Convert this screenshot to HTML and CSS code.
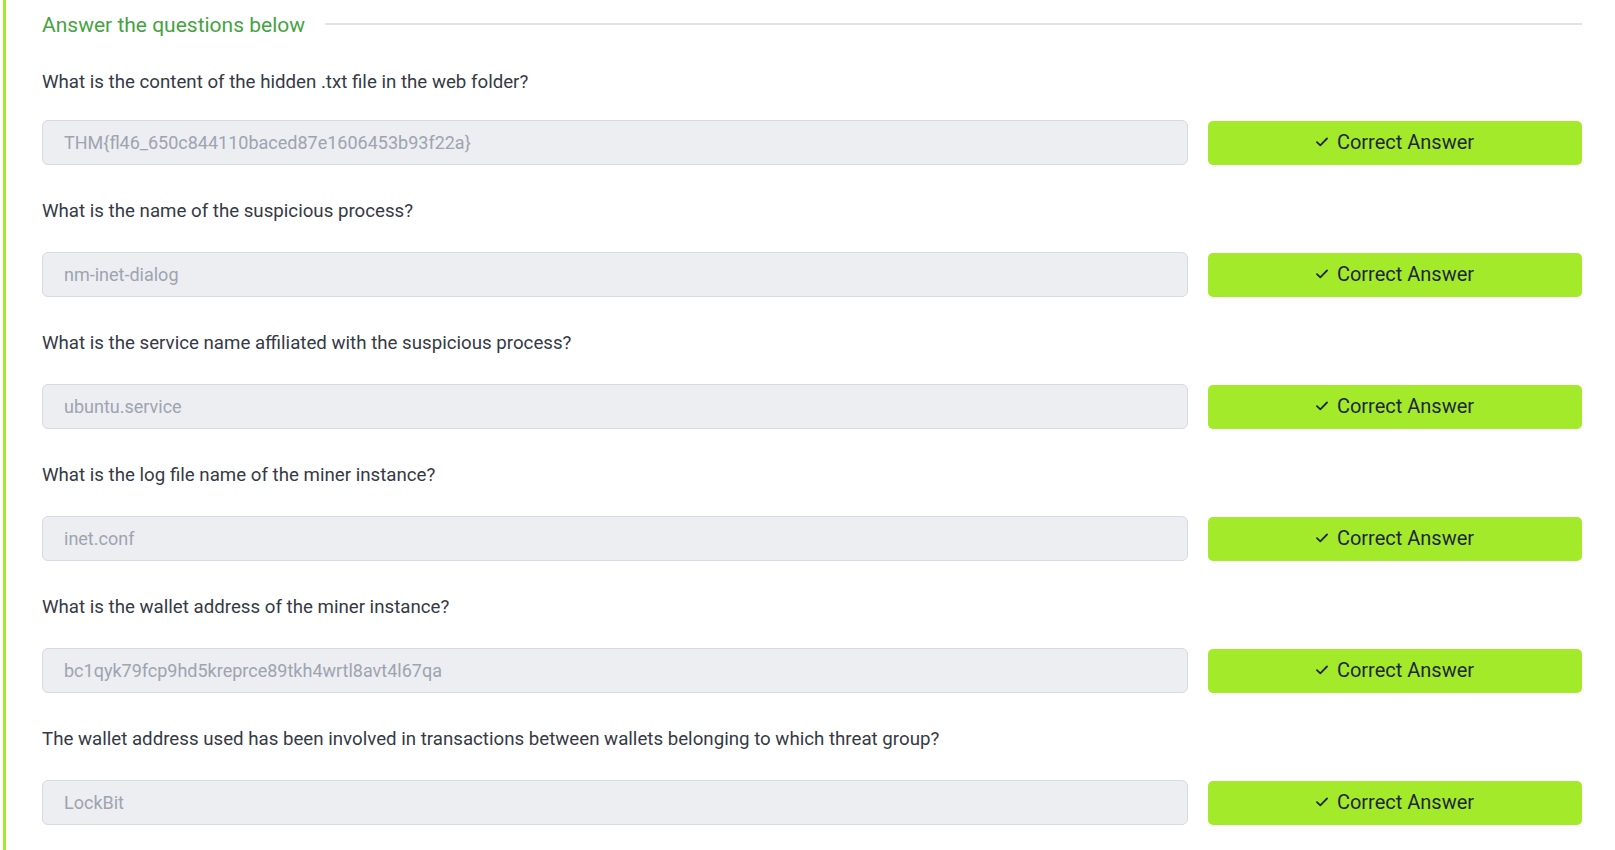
FILE: index.html
```html
<!DOCTYPE html>
<html lang="en">
<head>
<meta charset="utf-8">
<title>Answer the questions below</title>
<link rel="stylesheet" href="styles.css">
</head>
<body>
<div class="task">
  <div class="task-head">
    <h3 class="task-title">Answer the questions below</h3>
    <div class="task-rule"></div>
  </div>

  <div class="question question-first">
    <p class="q-text">What is the content of the hidden .txt file in the web folder?</p>
    <div class="q-row">
      <input class="q-input" type="text" value="THM{fl46_650c844110baced87e1606453b93f22a}" disabled>
      <button class="q-btn" type="button"><svg class="q-check" viewBox="0 0 12 10" width="12" height="10"><path d="M1 5.2 L4.3 8.3 L11 1.5" fill="none" stroke="currentColor" stroke-width="1.8" stroke-linecap="round" stroke-linejoin="round"/></svg>Correct Answer</button>
    </div>
  </div>

  <div class="question">
    <p class="q-text">What is the name of the suspicious process?</p>
    <div class="q-row">
      <input class="q-input" type="text" value="nm-inet-dialog" disabled>
      <button class="q-btn" type="button"><svg class="q-check" viewBox="0 0 12 10" width="12" height="10"><path d="M1 5.2 L4.3 8.3 L11 1.5" fill="none" stroke="currentColor" stroke-width="1.8" stroke-linecap="round" stroke-linejoin="round"/></svg>Correct Answer</button>
    </div>
  </div>

  <div class="question">
    <p class="q-text">What is the service name affiliated with the suspicious process?</p>
    <div class="q-row">
      <input class="q-input" type="text" value="ubuntu.service" disabled>
      <button class="q-btn" type="button"><svg class="q-check" viewBox="0 0 12 10" width="12" height="10"><path d="M1 5.2 L4.3 8.3 L11 1.5" fill="none" stroke="currentColor" stroke-width="1.8" stroke-linecap="round" stroke-linejoin="round"/></svg>Correct Answer</button>
    </div>
  </div>

  <div class="question">
    <p class="q-text">What is the log file name of the miner instance?</p>
    <div class="q-row">
      <input class="q-input" type="text" value="inet.conf" disabled>
      <button class="q-btn" type="button"><svg class="q-check" viewBox="0 0 12 10" width="12" height="10"><path d="M1 5.2 L4.3 8.3 L11 1.5" fill="none" stroke="currentColor" stroke-width="1.8" stroke-linecap="round" stroke-linejoin="round"/></svg>Correct Answer</button>
    </div>
  </div>

  <div class="question">
    <p class="q-text">What is the wallet address of the miner instance?</p>
    <div class="q-row">
      <input class="q-input" type="text" value="bc1qyk79fcp9hd5kreprce89tkh4wrtl8avt4l67qa" disabled>
      <button class="q-btn" type="button"><svg class="q-check" viewBox="0 0 12 10" width="12" height="10"><path d="M1 5.2 L4.3 8.3 L11 1.5" fill="none" stroke="currentColor" stroke-width="1.8" stroke-linecap="round" stroke-linejoin="round"/></svg>Correct Answer</button>
    </div>
  </div>

  <div class="question">
    <p class="q-text">The wallet address used has been involved in transactions between wallets belonging to which threat group?</p>
    <div class="q-row">
      <input class="q-input" type="text" value="LockBit" disabled>
      <button class="q-btn" type="button"><svg class="q-check" viewBox="0 0 12 10" width="12" height="10"><path d="M1 5.2 L4.3 8.3 L11 1.5" fill="none" stroke="currentColor" stroke-width="1.8" stroke-linecap="round" stroke-linejoin="round"/></svg>Correct Answer</button>
    </div>
  </div>
</div>
</body>
</html>
```

FILE: styles.css
```css
html, body {
  margin: 0;
  padding: 0;
  background: #ffffff;
  height: 100%;
  overflow: hidden;
}

body {
  font-family: Roboto, "Noto Sans", sans-serif;
  color: #353a45;
  padding-left: 3px;
}

.task {
  border-left: 3px solid #a3ea2a;
  padding: 11px 33px 0 36px;
  min-height: 100%;
  box-sizing: border-box;
}

.task-head {
  display: flex;
  align-items: center;
  height: 28px;
  margin-bottom: 31px;
}

.task-title {
  margin: 0;
  font-size: 21px;
  font-weight: 400;
  color: #46a341;
  line-height: 28px;
  white-space: nowrap;
}

.task-rule {
  flex: 1;
  height: 2px;
  background: #e0e3e9;
  margin-left: 20px;
  position: relative;
  top: -1px;
}

.question {
  margin-bottom: 34px;
}

.q-text {
  margin: 0 0 29px;
  font-size: 18.7px;
  line-height: 24px;
  color: #353a45;
}

.question-first .q-text {
  margin-bottom: 26px;
}

.q-row {
  display: flex;
  gap: 20px;
  align-items: center;
}

.q-input {
  flex: 1;
  height: 45px;
  box-sizing: border-box;
  border: 1px solid #d6dae1;
  border-radius: 6px;
  background: #eceef2;
  padding: 0 21px;
  font-family: Roboto, "Noto Sans", sans-serif;
  font-size: 18px;
  color: #9ea4b0;
  -webkit-text-fill-color: #9ea4b0;
  opacity: 1;
  margin: 0;
}

.q-btn {
  width: 374px;
  height: 44px;
  border: none;
  border-radius: 5px;
  background: #a3ea2a;
  color: #1e2736;
  font-family: Roboto, "Noto Sans", sans-serif;
  font-size: 20px;
  display: flex;
  align-items: center;
  justify-content: center;
  gap: 9px;
  padding: 0 0 2px;
  box-sizing: border-box;
  margin: 0;
  cursor: pointer;
}

.q-check {
  display: block;
}
```
